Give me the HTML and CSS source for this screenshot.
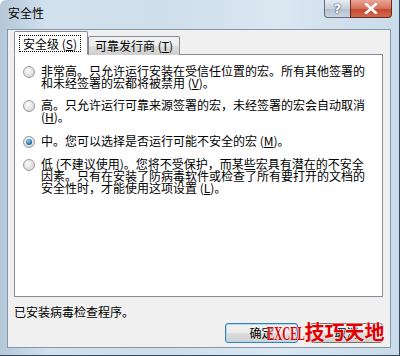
FILE: index.html
```html
<!DOCTYPE html>
<html>

<head>
    <meta charset="utf-8">
    <link rel="stylesheet" href="styles.css">
</head>

<body>
    <div class="win">
        <div class="titlebar">
            <span class="title">安全性</span>
            <div class="caption-btns">
                <div class="cap-help">?</div>
                <div class="cap-close">
                    <svg width="14" height="11" viewBox="0 0 14 11">
                        <path d="M2 1 L12 10 M12 1 L2 10" stroke="#fff" stroke-width="2.6" stroke-linecap="round" />
                    </svg>
                </div>
            </div>
        </div>

        <div class="client">
            <div class="tabs">
                <div class="tab active"><span class="focus">安全级 (<u>S</u>)</span></div>
                <div class="tab">可靠发行商 (<u>T</u>)</div>
            </div>

            <div class="panel">
                <div class="option">
                    <span class="radio"></span>
                    <div class="label">非常高。只允许运行安装在受信任位置的宏。所有其他签署的<br>和未经签署的宏都将被禁用 (<u>V</u>)。</div>
                </div>
                <div class="option">
                    <span class="radio"></span>
                    <div class="label">高。只允许运行可靠来源签署的宏，未经签署的宏会自动取消<br>(<u>H</u>)。</div>
                </div>
                <div class="option">
                    <span class="radio checked"></span>
                    <div class="label">中。您可以选择是否运行可能不安全的宏 (<u>M</u>)。</div>
                </div>
                <div class="option">
                    <span class="radio"></span>
                    <div class="label">低 (不建议使用)。您将不受保护，而某些宏具有潜在的不安全<br>因素。只有在安装了防病毒软件或检查了所有要打开的文档的<br>安全性时，才能使用这项设置 (<u>L</u>)。</div>
                </div>
            </div>

            <div class="status">已安装病毒检查程序。</div>

            <div class="footer">
                <button class="btn default">确定</button>
                <button class="btn">取消</button>
                <div class="watermark"><span class="latin">EXCEL</span>技巧天地</div>
            </div>
        </div>
    </div>
</body>

</html>
```

FILE: styles.css
```css
* {
    box-sizing: border-box;
}

body {
    margin: 0;
    width: 400px;
    height: 356px;
    overflow: hidden;
    font-family: "Noto Sans CJK SC", "Liberation Sans", sans-serif;
    font-size: 12px;
    color: #000;
}

.win {
    width: 400px;
    height: 356px;
    display: flex;
    flex-direction: column;
    padding: 0 8px 7px 7px;
    background: linear-gradient(to right, #b4c8d8 0%, #d3e1ee 12%, #cfdeeb 40%, #dbe7f1 70%, #c9dae8 100%);
    border-right: 1px solid #34495c;
    border-bottom: 1px solid #34495c;
    border-top-left-radius: 6px;
    position: relative;
}

.titlebar {
    height: 29px;
    display: flex;
    justify-content: space-between;
    align-items: flex-start;
}

.title {
    padding: 6px 0 0 1px;
    line-height: 14px;
}

.caption-btns {
    display: flex;
    margin-right: -1px;
}

.cap-help {
    width: 26px;
    height: 18px;
    border: 1px solid #5e6e7c;
    border-top: none;
    border-right: none;
    border-bottom-left-radius: 4px;
    background: linear-gradient(#e6ecf2, #c7d2dc 50%, #b3c1cd 51%, #c9d5df);
    color: #fff;
    text-align: center;
    font-family: "DejaVu Sans", sans-serif;
    font-size: 13px;
    font-weight: bold;
    line-height: 17px;
    text-shadow: 0 0 2px #33495c, 0 0 1px #33495c;
}

.cap-close {
    width: 42px;
    height: 18px;
    border: 1px solid #6a2a20;
    border-top: none;
    border-bottom-right-radius: 4px;
    background: linear-gradient(#e8a596, #d6705c 50%, #c6452f 51%, #d06a4f);
    display: flex;
    align-items: center;
    justify-content: center;
}

.client {
    flex: 1;
    background: #f0f0f0;
    border: 1px solid #8598aa;
    display: flex;
    flex-direction: column;
    padding: 1px 7px 0 6px;
}

.tabs {
    display: flex;
    align-items: flex-end;
    height: 24px;
    margin-bottom: -1px;
    position: relative;
    z-index: 1;
}

.tab {
    height: 19px;
    padding: 0 6px;
    border: 1px solid #898c95;
    border-bottom: none;
    border-radius: 2px 2px 0 0;
    background: linear-gradient(#f2f2f2, #ebebeb 50%, #dddddd 51%, #cfcfcf);
    line-height: 18px;
    margin-left: -1px;
}

.tab.active {
    height: 24px;
    margin-left: 0;
    padding: 3px 4px 0;
    background: #fff;
    border-bottom: 1px solid #fff;
    z-index: 2;
    position: relative;
    width: 74px;
    margin-right: 1px;
}

.tab.active .focus {
    display: inline-block;
    border: 1px dotted #000;
    padding: 0 3px;
    line-height: 15px;
    height: 17px;
}

.panel {
    height: 243px;
    background: #fff;
    border: 1px solid #898c95;
    padding: 10px 0 0 8px;
}

.option {
    display: flex;
    align-items: flex-start;
    margin-bottom: 10px;
}

.option:nth-child(2) {
    margin-bottom: 12px;
}

.radio {
    width: 12px;
    height: 12px;
    margin: 1px 6px 0 0;
    border-radius: 50%;
    border: 1px solid #9a9a9a;
    background: radial-gradient(circle at 40% 35%, #fbfbfb 0%, #e0e0e0 60%, #c9c9c9 100%);
    flex-shrink: 0;
    position: relative;
}

.radio.checked::after {
    content: "";
    position: absolute;
    left: 2px;
    top: 2px;
    width: 6px;
    height: 6px;
    border-radius: 50%;
    background: radial-gradient(circle at 40% 35%, #8dd0f0 0%, #2d7ab3 55%, #0b3f6e 100%);
}

.label {
    line-height: 12px;
    white-space: nowrap;
}

.status {
    height: 24px;
    padding: 8px 0 0 0;
    line-height: 14px;
}

.footer {
    display: flex;
    justify-content: flex-end;
    gap: 12px;
    padding-top: 2px;
    position: relative;
}

.btn {
    width: 73px;
    height: 20px;
    padding: 0;
    font-family: inherit;
    font-size: 12px;
    line-height: 16px;
    border: 1px solid #707070;
    border-radius: 3px;
    background: linear-gradient(#f2f2f2, #ebebeb 50%, #dddddd 51%, #cfcfcf);
    color: #000;
}

.btn.default {
    border-color: #3c7fb1;
    box-shadow: inset 0 0 0 1px #a8dcf4;
}

.watermark {
    position: absolute;
    left: 253px;
    top: -1px;
    color: #e00000;
    font-family: "Noto Sans CJK SC", serif;
    font-weight: bold;
    font-size: 20px;
    line-height: 24px;
    white-space: nowrap;
    text-shadow: 0 0 2px #fff, 0 0 1px #fff;
}

.watermark .latin {
    display: inline-block;
    font-family: "Liberation Serif", serif;
    font-size: 19px;
    transform: scaleX(0.58);
    transform-origin: left center;
    margin-right: -28px;
}
```
